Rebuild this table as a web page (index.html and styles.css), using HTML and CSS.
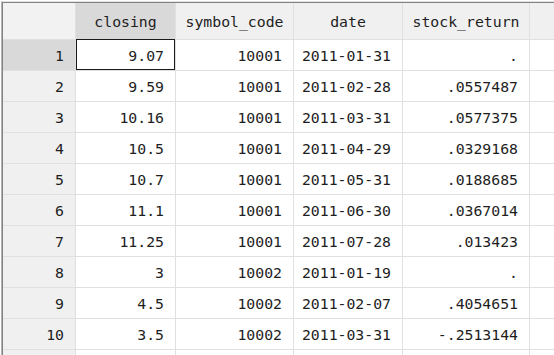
FILE: index.html
```html
<!DOCTYPE html>
<html lang="en">
<head>
  <meta charset="UTF-8" />
  <title>Data Editor</title>
  <link rel="stylesheet" href="styles.css">
</head>
<body>
  <div class="frame">
    <div class="grid">
      <!-- header -->
      <div class="head corner"></div>
      <div class="head active">closing</div>
      <div class="head">symbol_code</div>
      <div class="head">date</div>
      <div class="head">stock_return</div>
      <div class="head"></div>

      <div class="num active">1</div>
      <div class="cell selected">9.07</div>
      <div class="cell">10001</div>
      <div class="cell">2011-01-31</div>
      <div class="cell">.</div>
      <div class="cell"></div>

      <div class="num">2</div>
      <div class="cell">9.59</div>
      <div class="cell">10001</div>
      <div class="cell">2011-02-28</div>
      <div class="cell">.0557487</div>
      <div class="cell"></div>

      <div class="num">3</div>
      <div class="cell">10.16</div>
      <div class="cell">10001</div>
      <div class="cell">2011-03-31</div>
      <div class="cell">.0577375</div>
      <div class="cell"></div>

      <div class="num">4</div>
      <div class="cell">10.5</div>
      <div class="cell">10001</div>
      <div class="cell">2011-04-29</div>
      <div class="cell">.0329168</div>
      <div class="cell"></div>

      <div class="num">5</div>
      <div class="cell">10.7</div>
      <div class="cell">10001</div>
      <div class="cell">2011-05-31</div>
      <div class="cell">.0188685</div>
      <div class="cell"></div>

      <div class="num">6</div>
      <div class="cell">11.1</div>
      <div class="cell">10001</div>
      <div class="cell">2011-06-30</div>
      <div class="cell">.0367014</div>
      <div class="cell"></div>

      <div class="num">7</div>
      <div class="cell">11.25</div>
      <div class="cell">10001</div>
      <div class="cell">2011-07-28</div>
      <div class="cell">.013423</div>
      <div class="cell"></div>

      <div class="num">8</div>
      <div class="cell">3</div>
      <div class="cell">10002</div>
      <div class="cell">2011-01-19</div>
      <div class="cell">.</div>
      <div class="cell"></div>

      <div class="num">9</div>
      <div class="cell">4.5</div>
      <div class="cell">10002</div>
      <div class="cell">2011-02-07</div>
      <div class="cell">.4054651</div>
      <div class="cell"></div>

      <div class="num">10</div>
      <div class="cell">3.5</div>
      <div class="cell">10002</div>
      <div class="cell">2011-03-31</div>
      <div class="cell">-.2513144</div>
      <div class="cell"></div>

      <div class="num"></div>
      <div class="cell"></div>
      <div class="cell"></div>
      <div class="cell"></div>
      <div class="cell"></div>
      <div class="cell"></div>
    </div>
  </div>
</body>
</html>
```

FILE: styles.css
```css
body {
  margin: 0;
  background: #fff;
  overflow: hidden;
  font-family: "DejaVu Sans Mono", "Liberation Mono", monospace;
  font-size: 14.8px;
  color: #1e1e1e;
}

.frame {
  margin: 1px 0 0 1px;
  border-top: 1px solid #e2e2e2;
  border-left: 1px solid #b4b4b4;
}

.grid {
  display: grid;
  grid-template-columns: 72px 99px 117px 108px 126px 1fr;
  grid-template-rows: 36px repeat(10, 30px) 5px;
  gap: 1px;
  background: #e0e0e0;
  border-top: 1px solid #828282;
  border-left: 1px solid #828282;
}

.head {
  background: #f0f0f0;
  display: flex;
  align-items: center;
  justify-content: center;
  padding-top: 1px;
}

.head.corner {
  background: #f2f2f2;
}

.head.active,
.num.active {
  background: #d9d9d9;
}

.num {
  background: #f0f0f0;
  display: flex;
  align-items: center;
  justify-content: flex-end;
  padding-right: 11px;
}

.cell {
  background: #fff;
  display: flex;
  align-items: center;
  justify-content: flex-end;
  padding-right: 11px;
}

.cell.selected {
  position: relative;
}

.cell.selected::after {
  content: "";
  position: absolute;
  top: -1px;
  left: 0;
  right: 0;
  bottom: 0;
  border: 1px solid #1a1a1a;
}
```
